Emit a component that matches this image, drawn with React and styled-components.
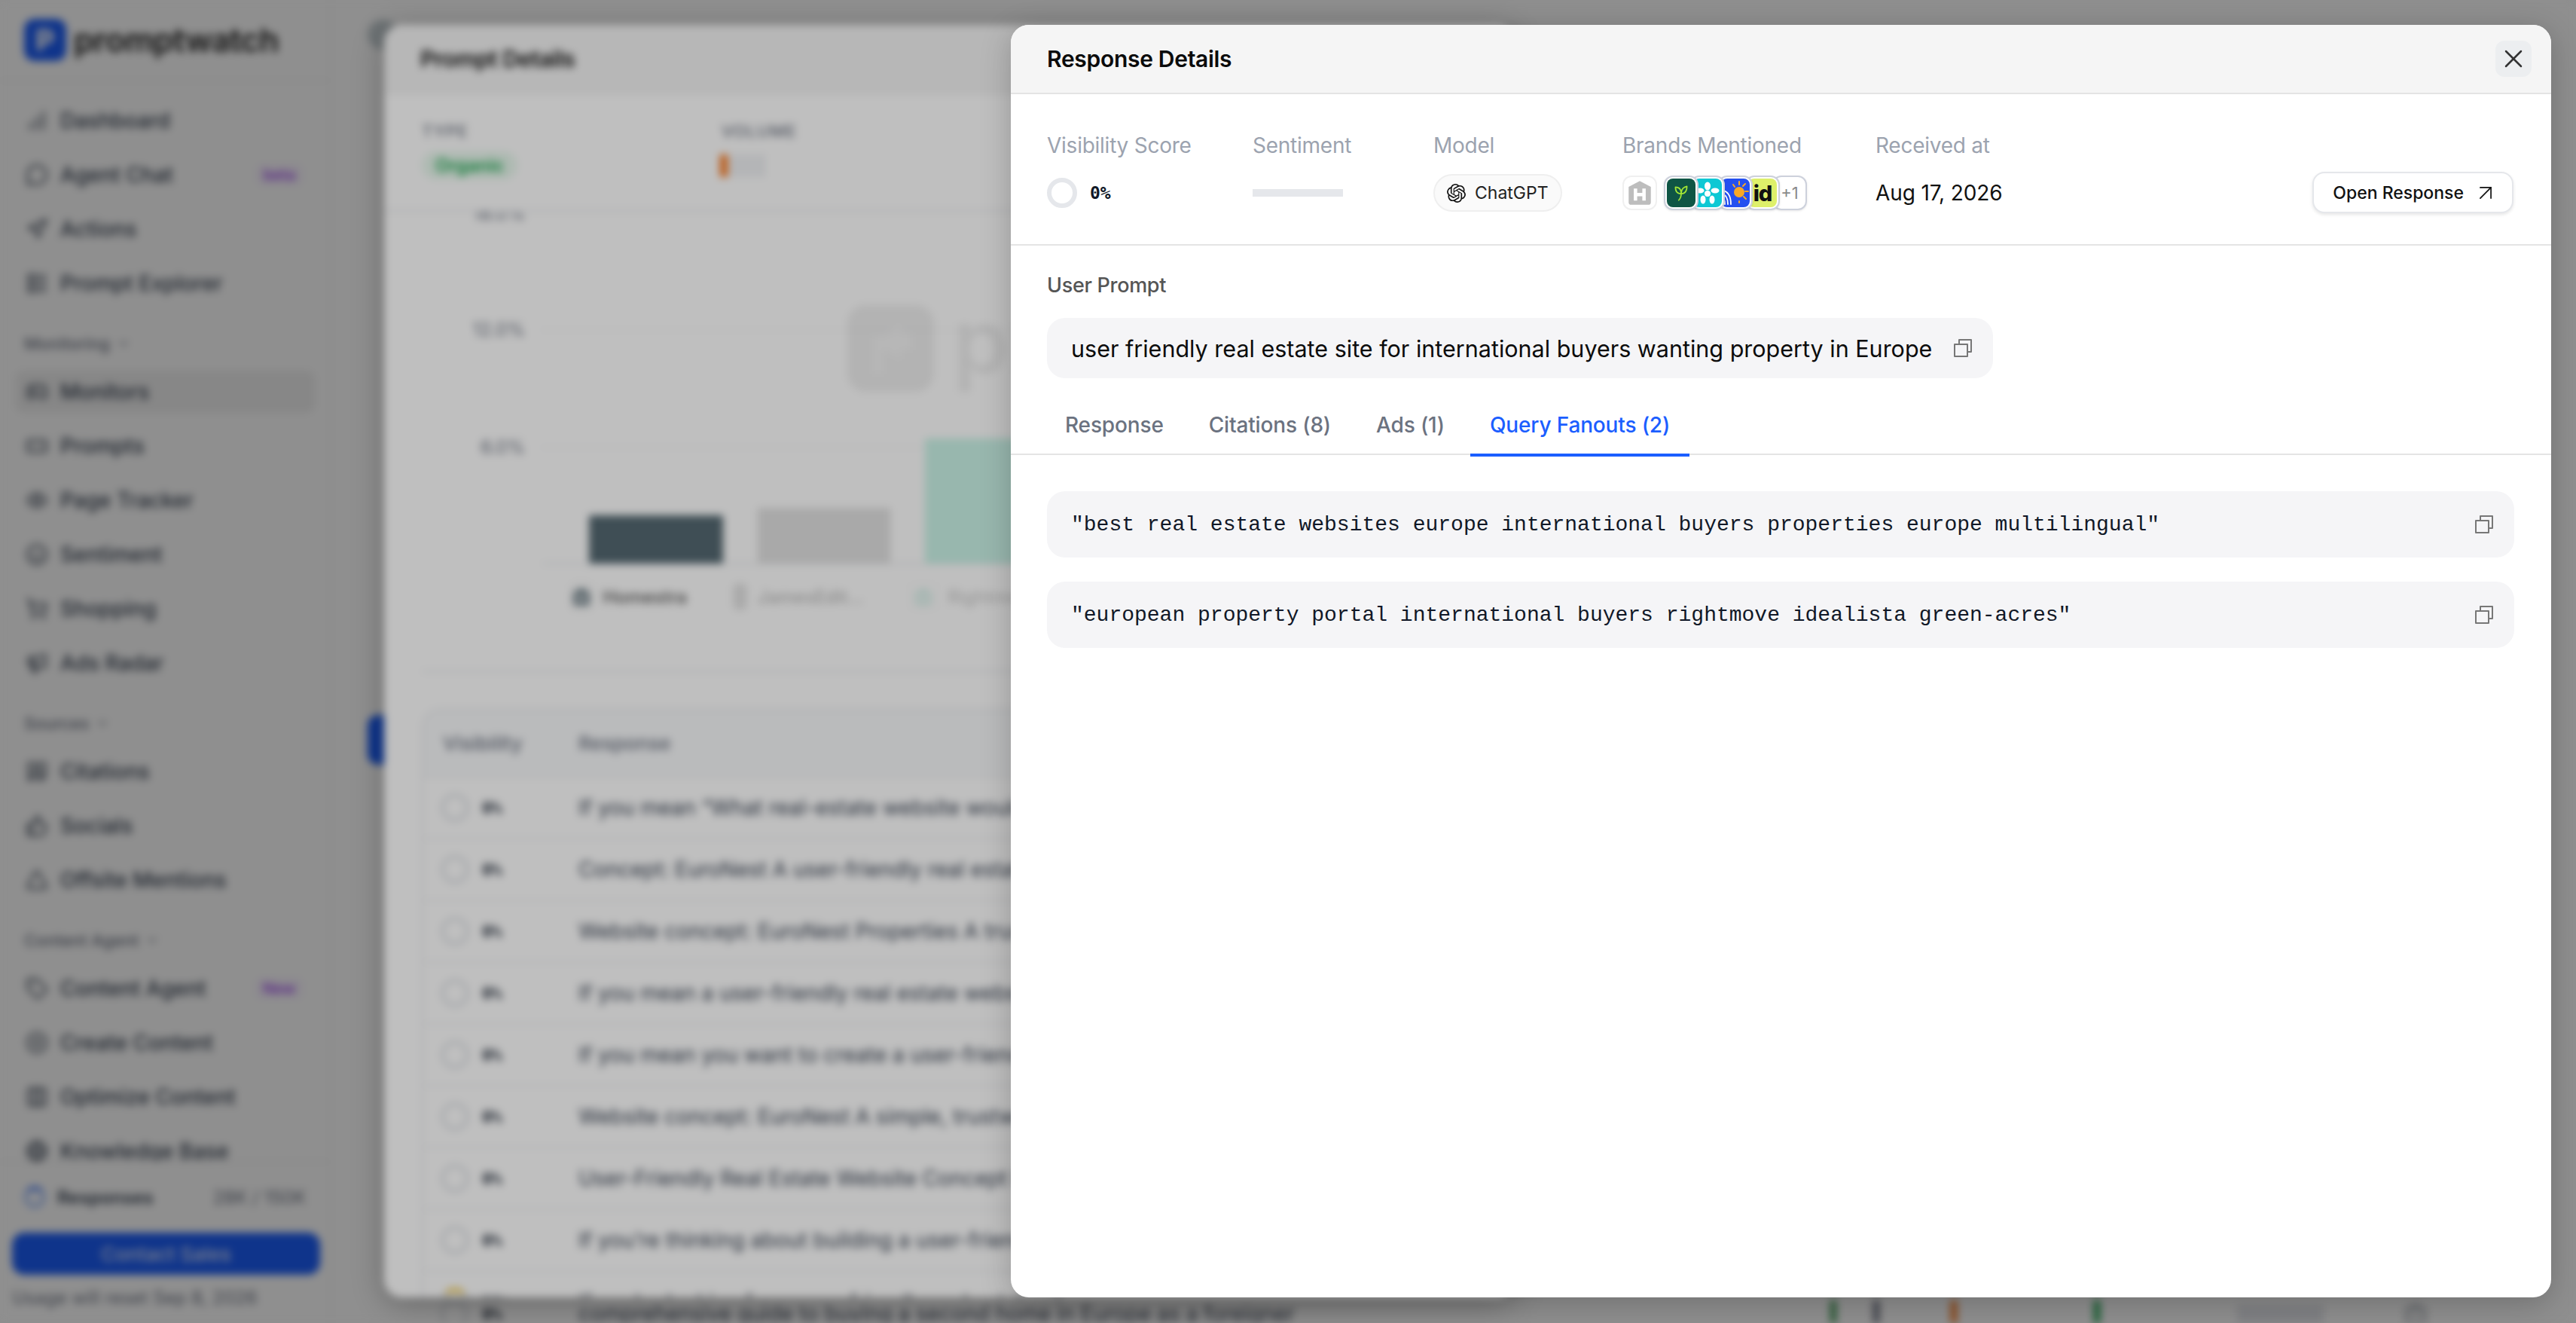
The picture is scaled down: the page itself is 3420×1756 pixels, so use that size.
import React from "react";
import styled, { createGlobalStyle } from "styled-components";
import {
  ArrowUpRight,
  ChartNoAxesColumnIncreasing,
  ChevronDown,
  CirclePlus,
  Columns3,
  Eye,
  Gamepad2,
  Globe,
  LayoutList,
  Megaphone,
  MessageCircle,
  Navigation,
  Quote,
  RectangleEllipsis,
  ShoppingCart,
  Smile,
  Tag,
  ThumbsUp,
  Triangle,
  X,
} from "lucide-react";
import { SiOpenai } from "react-icons/si";

const GlobalStyle = createGlobalStyle`
  html, body {
    margin: 0;
    padding: 0;
    background: #8e8e8e;
  }
  body {
    width: 3420px;
    height: 1756px;
    overflow: hidden;
    font-family: Inter, "Liberation Sans", sans-serif;
  }
  * {
    box-sizing: border-box;
  }
`;

const mono = `"Liberation Mono", "DejaVu Sans Mono", monospace`;

// Blurred page behind the two drawers
const Backdrop = styled.div`
  position: absolute;
  inset: 0;
  overflow: hidden;
  filter: blur(5.5px);
`;

const Dashboard = styled.div`
  display: flex;
  width: 3420px;
  height: 1756px;
  background: #fff;
`;

const Sidebar = styled.aside`
  display: flex;
  flex-direction: column;
  flex: none;
  width: 440px;
  height: 1756px;
  border-right: 2px solid #f1f1f1;
`;

const Brand = styled.div`
  display: flex;
  align-items: center;
  gap: 10px;
  flex: none;
  height: 108px;
  padding: 0 32px;
  border-bottom: 2px solid #f0f0f0;
`;

const BrandTile = styled.div`
  display: flex;
  align-items: center;
  justify-content: center;
  width: 56px;
  height: 56px;
  border-radius: 14px;
  background: #1b5ef9;
  color: #fff;
  font-size: 38px;
  font-weight: 800;
`;

const BrandName = styled.span`
  font-size: 43px;
  font-weight: 600;
  letter-spacing: -0.5px;
  color: #222;
`;

const Nav = styled.nav`
  flex: 1;
  min-height: 0;
  overflow: hidden;
  padding: 24px 20px 0;
`;

const NavGroup = styled.div`
  display: flex;
  flex-direction: column;
  gap: 16px;
`;

const GroupLabel = styled.div`
  display: flex;
  align-items: center;
  gap: 8px;
  height: 40px;
  margin: 32px 0 16px;
  padding-left: 12px;
  font-size: 22px;
  font-weight: 500;
  color: #6b7280;
`;

const NavItem = styled.div`
  display: flex;
  align-items: center;
  gap: 16px;
  height: 56px;
  padding: 0 14px;
  border-radius: 12px;
  font-size: 28px;
  font-weight: 500;
  color: #374151;
  background: ${(p) => (p.$active ? "#f1f1f1" : "transparent")};
`;

const NavText = styled.span`
  flex: 1;
`;

const NavBadge = styled.span`
  padding: 2px 10px;
  margin-right: 2px;
  border-radius: 8px;
  font-size: 20px;
  font-weight: 500;
  color: #9333ea;
  background: #faf5ff;
`;

const SideFooter = styled.div`
  display: flex;
  flex-direction: column;
  flex: none;
  height: 215px;
  padding: 28px 16px 0;
  border-top: 2px solid #f0f0f0;
`;

const UsageRow = styled.div`
  display: flex;
  align-items: center;
  gap: 16px;
  height: 36px;
  padding: 0 16px;
  font-size: 24px;
  font-weight: 600;
  color: #374151;
`;

const UsageRing = styled.div`
  width: 28px;
  height: 28px;
  border-radius: 50%;
  border: 4px solid #93b4fd;
  border-top-color: #1b5ef9;
`;

const UsageCount = styled.span`
  margin-left: auto;
  font-weight: 400;
  color: #6b7280;
`;

const ContactButton = styled.div`
  display: flex;
  align-items: center;
  justify-content: center;
  width: 409px;
  height: 56px;
  margin-top: 29px;
  border-radius: 16px;
  background: #1b5ef9;
  color: #dfe8ff;
  font-size: 26px;
  font-weight: 500;
`;

const UsageNote = styled.div`
  margin-top: 16px;
  font-size: 24px;
  color: #6b7280;
`;

const Main = styled.main`
  flex: 1;
  min-width: 0;
  padding-left: 48px;
`;

const TopIcon = styled.div`
  width: 40px;
  height: 40px;
  margin-top: 26px;
  border-radius: 50%;
  background: #c3ccd0;
`;

const BlueButton = styled.div`
  width: 100px;
  height: 66px;
  margin-top: 883px;
  border-radius: 14px;
  background: #1b5ef9;
`;

const BottomRow = styled.div`
  display: grid;
  grid-template-columns: 55px 128px 1662px 57px 103px 190px 190px 220px 40px;
  align-items: center;
  height: 40px;
  margin: 709px 0 0 97px;
  font-size: 28px;
  color: #374151;
`;

const Tick = styled.div`
  width: ${(p) => p.$w || 8}px;
  height: ${(p) => p.$h || 36}px;
  background: ${(p) => p.$color};
`;

const Dim = styled.div`
  position: absolute;
  inset: 0;
  background: rgba(0, 0, 0, 0.25);
`;

const Ring = styled.div`
  width: ${(p) => p.$size}px;
  height: ${(p) => p.$size}px;
  border-radius: 50%;
  border: ${(p) => p.$stroke}px solid ${(p) => p.$color || "#d1d5db"};
  border-top-color: ${(p) => p.$arc || p.$color || "#d1d5db"};
  flex: none;
`;

const Percent = styled.span`
  font-family: "DejaVu Sans Mono", monospace;
  font-size: 22px;
  font-weight: 700;
  color: #1f2937;
`;

// Prompt Details drawer, first level
const PromptDrawer = styled.section`
  position: absolute;
  left: 510px;
  top: 33px;
  width: 1500px;
  height: 1689px;
  overflow: hidden;
  border-radius: 24px;
  background: #fff;
  box-shadow: 0 8px 40px rgba(0, 0, 0, 0.3);
`;

const PromptHead = styled.header`
  display: flex;
  align-items: center;
  height: 92px;
  padding-left: 48px;
  border-bottom: 2px solid #ececec;
  background: #f5f5f5;
  font-size: 30px;
  font-weight: 600;
  letter-spacing: -0.5px;
  color: #111;
`;

const PromptMeta = styled.div`
  display: flex;
  height: 156px;
  padding: 36px 50px 0;
  border-bottom: 2px solid #e5e7eb;
`;

const PromptMetaCol = styled.div`
  display: flex;
  flex-direction: column;
  gap: 14px;
  width: 398px;
`;

const MetaCaption = styled.div`
  height: 26px;
  font-size: 22px;
  font-weight: 500;
  letter-spacing: 1px;
  color: #6b7280;
`;

const TypePill = styled.span`
  align-self: flex-start;
  padding: 4px 18px;
  border-radius: 20px;
  background: #e8f8ee;
  color: #16a34a;
  font-size: 24px;
  font-weight: 600;
`;

const VolumeBars = styled.div`
  display: flex;
  gap: 5px;
  height: 30px;
  margin: 4px 0 0 -2px;
`;

const VolumeBar = styled.div`
  width: ${(p) => (p.$on ? 10 : 7)}px;
  height: 30px;
  border-radius: 2px;
  background: ${(p) => (p.$on ? "#f97316" : "#e6e8ec")};
`;

const Chart = styled.svg`
  display: block;
  font-family: Inter, sans-serif;
`;

const Legend = styled.div`
  display: flex;
  align-items: center;
  gap: 60px;
  height: 44px;
  padding-left: 247px;
`;

const LegendItem = styled.div`
  display: flex;
  align-items: center;
  gap: 13px;
  width: ${(p) => p.$w}px;
  font-size: 24px;
  font-weight: 500;
  color: #555;
  opacity: ${(p) => p.$fade || 1};
`;

const LegendIcon = styled.div`
  display: flex;
  align-items: center;
  justify-content: center;
  width: 38px;
  height: 38px;
  border-radius: 8px;
  border: 2px solid #eee;
  background: ${(p) => p.$bg || "#fff"};
`;

const Divider = styled.div`
  height: 2px;
  margin: 76px 0 0 50px;
  background: #e5e7eb;
`;

const Table = styled.div`
  margin: 49px 0 0 50px;
  border: 2px solid #e5e7eb;
  border-radius: 24px 0 0 0;
  overflow: hidden;
`;

const TableHead = styled.div`
  display: grid;
  grid-template-columns: 180px 1fr;
  align-items: center;
  height: 87px;
  padding-left: 26px;
  background: #f9fafb;
  font-size: 26px;
  font-weight: 500;
  color: #6b7280;
`;

const TableRow = styled.div`
  display: grid;
  grid-template-columns: 182px 1fr;
  align-items: center;
  height: 82px;
  padding-left: 24px;
  border-top: 2px solid #eceef1;
  font-size: 28px;
  color: #374151;
  white-space: nowrap;
`;

const VisCell = styled.div`
  display: flex;
  align-items: center;
  gap: 18px;
`;

// Response Details drawer, on top and sharp
const ResponseDrawer = styled.section`
  position: absolute;
  left: 1342px;
  top: 33px;
  width: 2045px;
  height: 1689px;
  overflow: hidden;
  border-radius: 24px;
  background: #fff;
  box-shadow: 0 8px 40px rgba(0, 0, 0, 0.22);
`;

const Header = styled.header`
  display: flex;
  align-items: center;
  justify-content: space-between;
  height: 92px;
  padding: 0 26px 0 48px;
  border-bottom: 2px solid #e4e4e4;
  background: #f5f5f5;
`;

const Title = styled.h2`
  margin: 0;
  font-size: 30px;
  font-weight: 600;
  letter-spacing: -0.3px;
  color: #0b0b0b;
`;

const CloseButton = styled.button`
  display: flex;
  align-items: center;
  justify-content: center;
  width: 48px;
  height: 48px;
  padding: 0;
  border: none;
  border-radius: 12px;
  background: #eceef0;
  color: #333;
`;

const MetaRow = styled.div`
  display: flex;
  height: 201px;
  padding: 50px 50px 0 48px;
  border-bottom: 2px solid #e4e4e4;
`;

const MetaCol = styled.div`
  display: flex;
  flex-direction: column;
  width: ${(p) => p.$w}px;
`;

const MetaLabel = styled.div`
  height: 36px;
  font-size: 28px;
  line-height: 36px;
  letter-spacing: -0.25px;
  color: #9ca3af;
`;

const MetaValue = styled.div`
  display: flex;
  align-items: center;
  height: 56px;
  margin-top: 17px;
`;

const ScoreText = styled.span`
  margin-left: 17px;
  font-family: "DejaVu Sans Mono", monospace;
  font-size: 23px;
  font-weight: 700;
  color: #111827;
`;

const SentimentBar = styled.div`
  width: 120px;
  height: 10px;
  background: #e5e7eb;
`;

const ModelPill = styled.div`
  display: flex;
  align-items: center;
  gap: 12px;
  height: 50px;
  padding: 0 16px;
  border: 2px solid #efefef;
  border-radius: 25px;
  background: #fafafa;
  font-size: 23px;
  color: #222;
`;

const BrandTileBox = styled.div`
  display: flex;
  align-items: center;
  justify-content: center;
  position: relative;
  z-index: ${(p) => p.$z || 0};
  width: 46px;
  height: 46px;
  margin-left: ${(p) => p.$ml || 0}px;
  padding: 2px;
  border: 2px solid ${(p) => p.$edge || "#cdd1dc"};
  border-radius: 12px;
  background: #fff;
  color: #8a8a8a;
  font-size: 22px;
  box-shadow: ${(p) => (p.$flat ? "none" : "0 1px 3px rgba(0, 0, 0, 0.1)")};
`;

const BrandFill = styled.div`
  display: flex;
  align-items: center;
  justify-content: center;
  width: 100%;
  height: 100%;
  border-radius: 8px;
  background: ${(p) => p.$bg};
  overflow: hidden;
`;

const IdMark = styled.span`
  font-size: 29px;
  font-weight: 800;
  line-height: 1;
  letter-spacing: -1px;
  color: #111;
`;

const DateValue = styled.span`
  font-size: 28px;
  letter-spacing: -0.1px;
  color: #111;
`;

const OpenButton = styled.button`
  display: flex;
  align-items: center;
  align-self: flex-start;
  gap: 12px;
  height: 55px;
  margin: 53px 0 0 auto;
  padding: 0 18px 0 25px;
  border: 2px solid #e5e7eb;
  border-radius: 16px;
  background: #fff;
  box-shadow: 0 2px 4px rgba(0, 0, 0, 0.1);
  font-family: inherit;
  font-size: 23px;
  font-weight: 500;
  color: #111;
`;

const PromptSection = styled.div`
  padding: 35px 48px 0;
`;

const SectionLabel = styled.div`
  height: 36px;
  font-size: 27px;
  font-weight: 500;
  line-height: 36px;
  letter-spacing: -0.3px;
  color: #555;
`;

const PromptBox = styled.div`
  display: inline-flex;
  align-items: center;
  gap: 29px;
  height: 80px;
  margin-top: 25px;
  padding: 0 28px 0 32px;
  border-radius: 24px;
  background: #f5f5f7;
  font-size: 30.5px;
  color: #0c0c0c;
`;

const Tabs = styled.div`
  display: flex;
  gap: 8px;
  height: 74px;
  margin-top: 28px;
  padding-left: 46px;
  border-bottom: 2px solid #e4e4e4;
`;

const Tab = styled.div`
  display: flex;
  align-items: center;
  height: 76px;
  padding: 0 26px 4px;
  border-bottom: 4px solid ${(p) => (p.$active ? "#1b5eff" : "transparent")};
  font-size: 28px;
  font-weight: 500;
  letter-spacing: -0.15px;
  color: ${(p) => (p.$active ? "#1b5eff" : "#6b7280")};
`;

const FanoutList = styled.div`
  display: flex;
  flex-direction: column;
  gap: 32px;
  padding: 48px 49px 0 48px;
`;

const FanoutItem = styled.div`
  display: flex;
  align-items: center;
  justify-content: space-between;
  height: 88px;
  padding: 0 28px 0 32px;
  border-radius: 24px;
  background: #f5f5f7;
  font-family: ${mono};
  font-size: 28px;
  color: #111827;
`;

function CopyIcon() {
  return (
    <svg width="24" height="24" viewBox="0 0 24 24" fill="none" stroke="#777" strokeWidth="2" strokeLinejoin="round">
      <path d="M7 6V1h16v16h-5" />
      <rect x="1" y="7" width="17" height="16" />
    </svg>
  );
}

function HouseIcon({ size = 34, color = "#bdbdbd" }) {
  return (
    <svg width={size} height={size} viewBox="0 0 30 30">
      <path
        fill={color}
        fillRule="evenodd"
        d="M15 1l13 7v18a3 3 0 0 1-3 3H5a3 3 0 0 1-3-3V8zM8 10v14h4v-5h6v5h4V10h-4v5h-6v-5z"
      />
    </svg>
  );
}

function LeafIcon() {
  return (
    <svg width="26" height="26" viewBox="0 0 24 24" fill="none" stroke="#a3e635" strokeWidth="1.6" strokeLinecap="round" strokeLinejoin="round">
      <path d="M12 13C8 13 5 11 5 5c4 0 7 2 7 8z" />
      <path d="M12 13c0-5 2-8 7-9 0 6-2 9-7 9z" />
      <path d="M12 13c0 4-1 6-3 8" />
    </svg>
  );
}

function FlowerIcon() {
  return (
    <svg width="34" height="34" viewBox="0 0 34 34" fill="#fff">
      <ellipse cx="17" cy="8" rx="4" ry="5.5" />
      <ellipse cx="7" cy="14" rx="5.5" ry="3.5" />
      <ellipse cx="27" cy="14" rx="5.5" ry="3.5" />
      <ellipse cx="11" cy="26" rx="3.5" ry="5.5" />
      <ellipse cx="23" cy="26" rx="3.5" ry="5.5" />
      <circle cx="17" cy="18" r="4" />
    </svg>
  );
}

function SunIcon() {
  return (
    <svg width="38" height="38" viewBox="0 0 38 38" fill="none">
      <circle cx="24" cy="18" r="7" fill="#f9a825" />
      <g stroke="#f9a825" strokeWidth="2" strokeLinecap="round">
        <path d="M24 4v4M32 7l-3 3M36 17h-4M33 27l-3-3M24 30v2M16 8l2 3" />
      </g>
      <g stroke="#fff" strokeWidth="1.8" fill="none" strokeLinecap="round">
        <path d="M1 16c7 0 12 6 12 18" />
        <path d="M1 21c5 0 8 5 8 13" />
        <path d="M1 26c3 0 4 3 4 8" />
      </g>
    </svg>
  );
}

const navTop = [
  { label: "Dashboard", Icon: ChartNoAxesColumnIncreasing },
  { label: "Agent Chat", Icon: MessageCircle, badge: "beta" },
  { label: "Actions", Icon: Navigation },
  { label: "Prompt Explorer", Icon: LayoutList },
];

const navGroups = [
  {
    title: "Monitoring",
    items: [
      { label: "Monitors", Icon: Gamepad2, active: true },
      { label: "Prompts", Icon: RectangleEllipsis },
      { label: "Page Tracker", Icon: Eye },
      { label: "Sentiment", Icon: Smile },
      { label: "Shopping", Icon: ShoppingCart },
      { label: "Ads Radar", Icon: Megaphone },
    ],
  },
  {
    title: "Sources",
    items: [
      { label: "Citations", Icon: Quote },
      { label: "Socials", Icon: ThumbsUp },
      { label: "Offsite Mentions", Icon: Triangle },
    ],
  },
  {
    title: "Content Agent",
    items: [
      { label: "Content Agent", Icon: Tag, badge: "New" },
      { label: "Create Content", Icon: CirclePlus },
      { label: "Optimize Content", Icon: Columns3 },
      { label: "Knowledge Base", Icon: Globe },
    ],
  },
];

const responses = [
  "If you mean \u201cWhat real-estate website would",
  "Concept: EuroNest A user-friendly real estate",
  "Website concept: EuroNest Properties A trust",
  "If you mean a user-friendly real estate website",
  "If you mean you want to create a user-friendly",
  "Website concept: EuroNest A simple, trustwo",
  "User-Friendly Real Estate Website Concept F",
  "If you\u2019re thinking about building a user-friendly",
];

const fanouts = [
  "\"best real estate websites europe international buyers properties europe multilingual\"",
  "\"european property portal international buyers rightmove idealista green-acres\"",
];

function renderNavItem({ label, Icon, badge, active }) {
  return (
    <NavItem key={label} $active={active}>
      <Icon size={30} strokeWidth={2} />
      <NavText>{label}</NavText>
      {badge && <NavBadge>{badge}</NavBadge>}
    </NavItem>
  );
}

function PageBehind() {
  return (
    <Dashboard>
      <Sidebar>
        <Brand>
          <BrandTile>P</BrandTile>
          <BrandName>promptwatch</BrandName>
        </Brand>
        <Nav>
          <NavGroup>{navTop.map(renderNavItem)}</NavGroup>
          {navGroups.map((group) => (
            <div key={group.title}>
              <GroupLabel>
                {group.title}
                <ChevronDown size={20} />
              </GroupLabel>
              <NavGroup>{group.items.map(renderNavItem)}</NavGroup>
            </div>
          ))}
        </Nav>
        <SideFooter>
          <UsageRow>
            <UsageRing />
            Responses
            <UsageCount>28K / 150K</UsageCount>
          </UsageRow>
          <ContactButton>Contact Sales</ContactButton>
          <UsageNote>Usage will reset Sep 8, 2026</UsageNote>
        </SideFooter>
      </Sidebar>
      <Main>
        <TopIcon />
        <BlueButton />
        <BottomRow>
          <Ring $size={36} $stroke={3} />
          <Percent>0%</Percent>
          <span>comprehensive guide to buying a second home in Europe as a foreigner</span>
          <Tick $color="#3f9a55" />
          <Tick $color="#6b7280" />
          <Tick $color="#f97316" />
          <Tick $color="#16a34a" />
          <Tick $color="#e5e7eb" $w={115} $h={24} />
          <HouseIcon size={34} color="#c9ccd1" />
        </BottomRow>
      </Main>
    </Dashboard>
  );
}

function PromptDetails() {
  return (
    <PromptDrawer>
      <PromptHead>Prompt Details</PromptHead>
      <PromptMeta>
        <PromptMetaCol>
          <MetaCaption>TYPE</MetaCaption>
          <TypePill>Organic</TypePill>
        </PromptMetaCol>
        <PromptMetaCol>
          <MetaCaption>VOLUME</MetaCaption>
          <VolumeBars>
            <VolumeBar $on />
            <VolumeBar />
            <VolumeBar />
            <VolumeBar />
            <VolumeBar />
          </VolumeBars>
        </PromptMetaCol>
      </PromptMeta>
      <Chart width="1500" height="489" viewBox="0 0 1500 489">
        <g fontSize="24" fill="#6b7280" textAnchor="end">
          <text x="187" y="11">18.0%</text>
          <text x="187" y="165">12.0%</text>
          <text x="187" y="321">6.0%</text>
        </g>
        <g stroke="#e5e7eb" strokeWidth="2" strokeDasharray="4 6">
          <path d="M210 157H1500M210 313H1500" />
        </g>
        <path d="M210 467H1500" stroke="#e5e7eb" strokeWidth="2" />
        <rect x="272" y="403" width="178" height="64" fill="#546872" />
        <rect x="496" y="393" width="176" height="74" fill="#e2e2e2" />
        <rect x="718" y="301" width="178" height="166" fill="#cbf5e8" />
        <g opacity="0.06">
          <rect x="615" y="124" width="115" height="115" rx="24" fill="#000" />
          <text x="755" y="215" fontSize="120" fontWeight="600" fill="#000">promptwatch</text>
        </g>
        <path d="M650 215v-50h16l20-18v14h14v22h-14v14l-20-14h-4v32z" fill="#fff" opacity="0.35" />
      </Chart>
      <Legend>
        <LegendItem $w={155}>
          <LegendIcon>
            <HouseIcon size={24} color="#546872" />
          </LegendIcon>
          Homestra
        </LegendItem>
        <LegendItem $w={175} $fade={0.4}>
          <LegendIcon $bg="#bbb" />
          JamesEdit...
        </LegendItem>
        <LegendItem $w={180} $fade={0.3}>
          <LegendIcon>
            <HouseIcon size={24} color="#6fcfb4" />
          </LegendIcon>
          Rightmove
        </LegendItem>
      </Legend>
      <Divider />
      <Table>
        <TableHead>
          <span>Visibility</span>
          <span>Response</span>
        </TableHead>
        {responses.map((text) => (
          <TableRow key={text}>
            <VisCell>
              <Ring $size={36} $stroke={3} />
              <Percent>0%</Percent>
            </VisCell>
            <span>{text}</span>
          </TableRow>
        ))}
        <TableRow>
          <VisCell>
            <Ring $size={36} $stroke={4} $arc="#eab308" />
            <Percent>33%</Percent>
          </VisCell>
          <span>If you&apos;re looking for a user-friendly real estate site</span>
        </TableRow>
      </Table>
    </PromptDrawer>
  );
}

export default function App() {
  return (
    <>
      <GlobalStyle />
      <Backdrop>
        <PageBehind />
        <Dim />
        <PromptDetails />
        <Dim />
      </Backdrop>
      <ResponseDrawer>
        <Header>
          <Title>Response Details</Title>
          <CloseButton aria-label="Close">
            <X size={40} strokeWidth={1.5} />
          </CloseButton>
        </Header>
        <MetaRow>
          <MetaCol $w={273}>
            <MetaLabel>Visibility Score</MetaLabel>
            <MetaValue>
              <Ring $size={40} $stroke={6} $color="#e5e7eb" />
              <ScoreText>0%</ScoreText>
            </MetaValue>
          </MetaCol>
          <MetaCol $w={240}>
            <MetaLabel>Sentiment</MetaLabel>
            <MetaValue>
              <SentimentBar />
            </MetaValue>
          </MetaCol>
          <MetaCol $w={251}>
            <MetaLabel>Model</MetaLabel>
            <MetaValue>
              <ModelPill>
                <SiOpenai size={25} color="#111" />
                ChatGPT
              </ModelPill>
            </MetaValue>
          </MetaCol>
          <MetaCol $w={336}>
            <MetaLabel>Brands Mentioned</MetaLabel>
            <MetaValue>
              <BrandTileBox $edge="#f0f0f0" $flat>
                <HouseIcon />
              </BrandTileBox>
              <BrandTileBox $ml={9} $z={5}>
                <BrandFill $bg="#0f5545">
                  <LeafIcon />
                </BrandFill>
              </BrandTileBox>
              <BrandTileBox $ml={-11} $z={4}>
                <BrandFill $bg="#0ec8d4">
                  <FlowerIcon />
                </BrandFill>
              </BrandTileBox>
              <BrandTileBox $ml={-9} $z={3}>
                <BrandFill $bg="#2450f0">
                  <SunIcon />
                </BrandFill>
              </BrandTileBox>
              <BrandTileBox $ml={-10} $z={2}>
                <BrandFill $bg="#def06a">
                  <IdMark>id</IdMark>
                </BrandFill>
              </BrandTileBox>
              <BrandTileBox $ml={-10} $z={1}>+1</BrandTileBox>
            </MetaValue>
          </MetaCol>
          <MetaCol $w={200}>
            <MetaLabel>Received at</MetaLabel>
            <MetaValue>
              <DateValue>Aug 17, 2026</DateValue>
            </MetaValue>
          </MetaCol>
          <OpenButton>
            Open Response
            <ArrowUpRight size={34} strokeWidth={1.2} />
          </OpenButton>
        </MetaRow>
        <PromptSection>
          <SectionLabel>User Prompt</SectionLabel>
          <PromptBox>
            user friendly real estate site for international buyers wanting property in Europe
            <CopyIcon />
          </PromptBox>
        </PromptSection>
        <Tabs>
          <Tab>Response</Tab>
          <Tab>Citations (8)</Tab>
          <Tab>Ads (1)</Tab>
          <Tab $active>Query Fanouts (2)</Tab>
        </Tabs>
        <FanoutList>
          {fanouts.map((text) => (
            <FanoutItem key={text}>
              {text}
              <CopyIcon />
            </FanoutItem>
          ))}
        </FanoutList>
      </ResponseDrawer>
    </>
  );
}
